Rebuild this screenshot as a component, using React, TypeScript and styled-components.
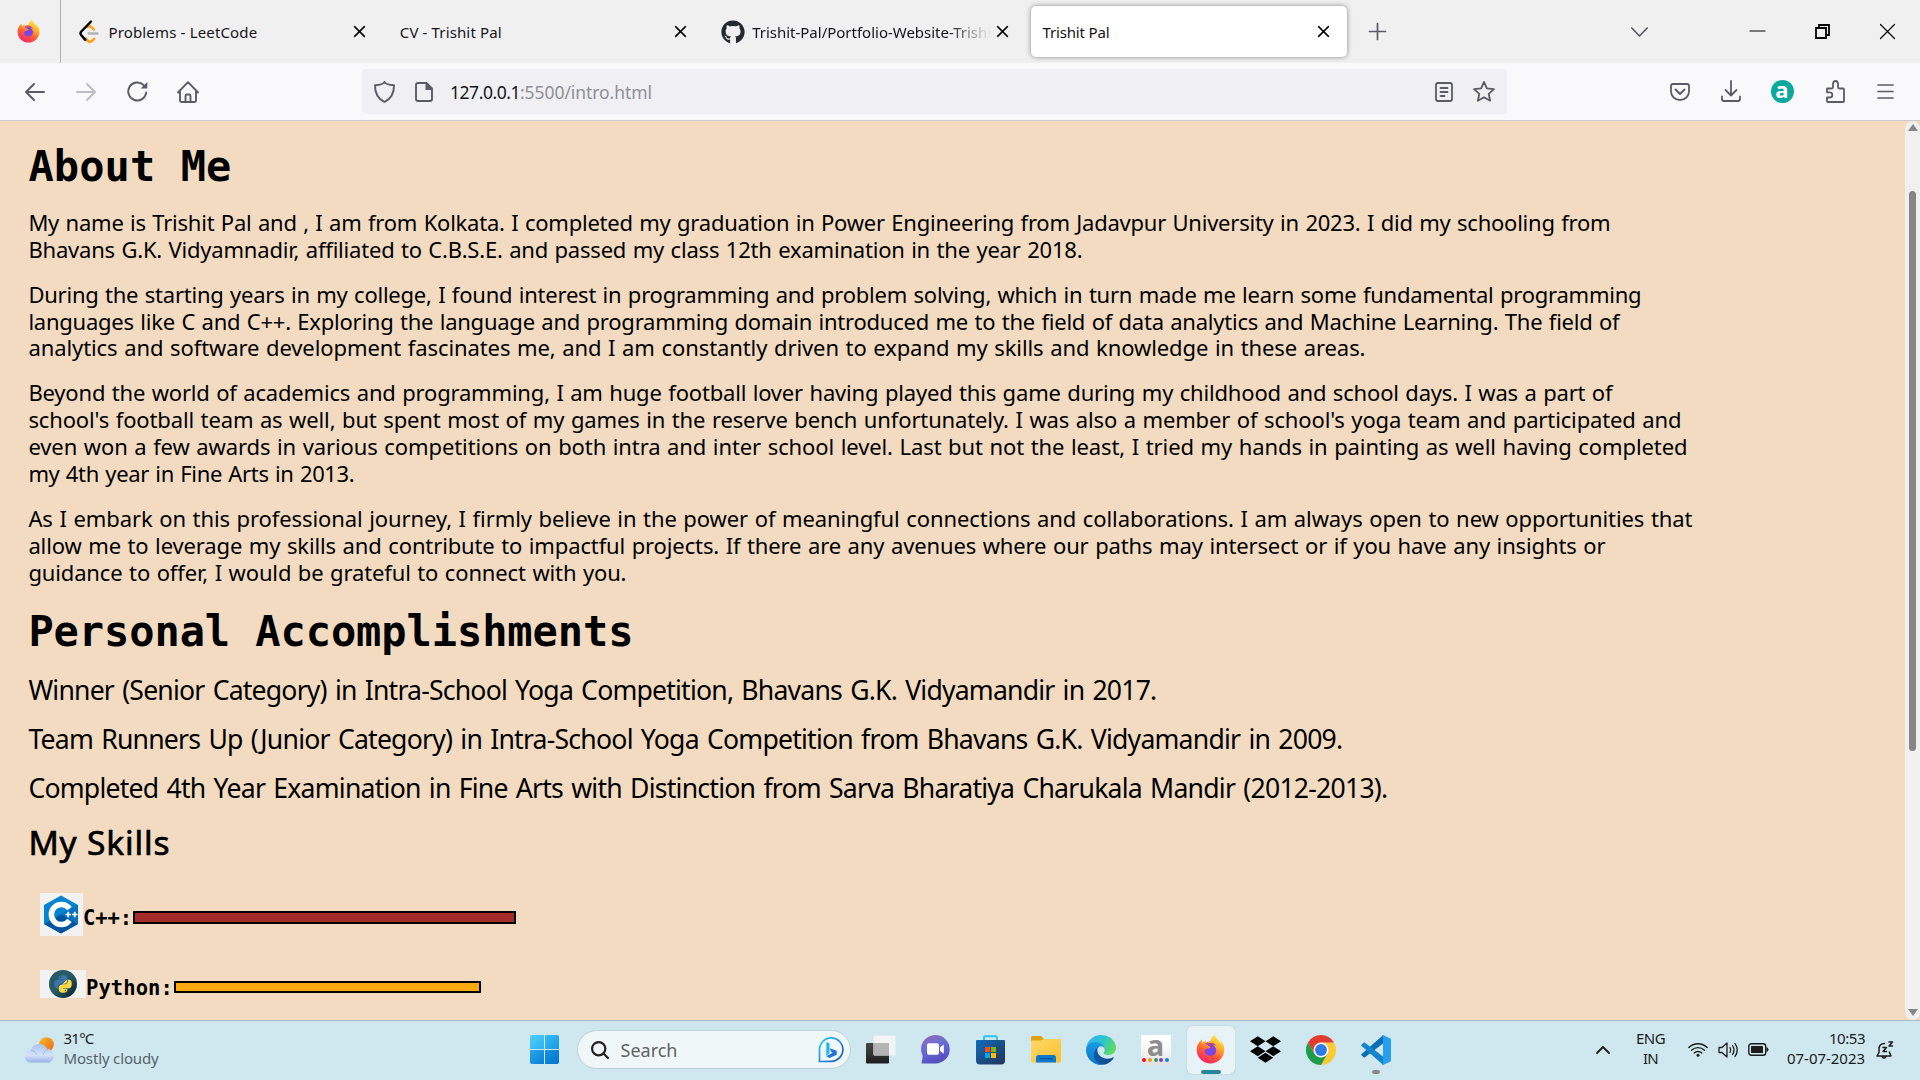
import React, { useLayoutEffect, useRef, useState } from 'react';
import styled, { createGlobalStyle, css } from 'styled-components';
import { FaGithub, FaDropbox, FaPython, FaFirefoxBrowser } from 'react-icons/fa';

const ui = '"Noto Sans", "Open Sans", sans-serif';
const mono = '"DejaVu Sans Mono", "Liberation Mono", monospace';

const Global = createGlobalStyle`
  * { box-sizing: border-box; }
  body { margin: 0; overflow: hidden; font-family: ${ui}; color: #000; }
  h1, h2, p, ul { margin: 0; padding: 0; font-weight: inherit; }
  ul { list-style: none; }
  svg { display: block; flex: none; overflow: visible; }
`;

/* ---------- text whose tracking is tuned to a measure ---------- */

const Tracked = styled.span`
  display: block;
  width: max-content;
  white-space: pre;
`;

function Fit({ w, children, className }: { w: number; children: string; className?: string }) {
  const ref = useRef<HTMLSpanElement>(null);
  const [spacing, setSpacing] = useState(0);
  useLayoutEffect(() => {
    if (ref.current) {
      const natural = ref.current.getBoundingClientRect().width;
      setSpacing((w - natural) / children.length);
    }
  }, [w, children]);
  return (
    <Tracked ref={ref} className={className} style={{ letterSpacing: spacing }}>
      {children}
    </Tracked>
  );
}

/* ---------- frame ---------- */

const Screen = styled.div`
  width: 1920px;
  height: 1080px;
  display: flex;
  flex-direction: column;
  overflow: hidden;
  background: #f2dbc1;
`;

const Slot = styled.div<{ $w: number; $ml?: number }>`
  flex: none;
  width: ${(p) => p.$w}px;
  margin-left: ${(p) => p.$ml ?? 0}px;
  display: flex;
  align-items: center;
  justify-content: center;
`;

/* ---------- tab strip ---------- */

const TabStrip = styled.div`
  flex: none;
  height: 63px;
  display: flex;
  align-items: center;
  background: #f0f0f0;
`;

const Pinned = styled.div`
  width: 61px;
  height: 63px;
  padding: 0 4px 1px 0;
  display: flex;
  align-items: center;
  justify-content: center;
  border-right: 1px solid #b0b0b2;
`;

const Tabs = styled.div`
  display: flex;
  gap: 5.2px;
  margin-left: 5.4px;
`;

const Tab = styled.div<{ $active?: boolean }>`
  width: 316.2px;
  height: 51px;
  padding: 0 12px;
  display: flex;
  align-items: center;
  border-radius: 5px;
  ${(p) => p.$active && css`
    background: #fff;
    box-shadow: 0 0 5px rgba(0, 0, 0, 0.45);
  `}
`;

const TabIcon = styled.div<{ $gap: number; $ml?: number }>`
  margin: 0 ${(p) => p.$gap}px 0 ${(p) => p.$ml ?? 0}px;
`;

const TabLabel = styled.div<{ $fade?: boolean }>`
  flex: 1;
  min-width: 0;
  font-size: 15px;
  line-height: 22px;
  padding-top: 1px;
  color: #15141a;
  ${(p) => p.$fade && css`
    mask-image: linear-gradient(to right, #000 calc(100% - 44px), transparent);
  `}
`;

const TabClose = styled.div`
  width: 22px;
  display: flex;
  justify-content: center;
`;

/* ---------- navigation bar ---------- */

const NavBar = styled.div`
  flex: none;
  height: 58px;
  display: flex;
  align-items: center;
  background: #f9f9fb;
  border-bottom: 1px solid #cccccf;
  color: #5b5b66;
`;

const UrlBar = styled.div`
  width: 1145px;
  height: 45px;
  margin-left: 154px;
  display: flex;
  align-items: center;
  border-radius: 5px;
  background: #f0eff4;
`;

const Address = styled.div`
  flex: 1;
  display: flex;
  margin-left: 8px;
  font-size: 17.5px;
  line-height: 24px;
  color: #15141a;
`;

const AddressPath = styled(Fit)`
  color: #8f8f96;
`;

const Avatar = styled.div`
  width: 23px;
  height: 23px;
  border-radius: 50%;
  background: #0aa89e;
  color: #fff;
  font: bold 22px/18px "Open Sans", sans-serif;
  text-align: center;
`;

/* ---------- web page ---------- */

const Viewport = styled.main`
  flex: none;
  height: 899px;
  display: flex;
  overflow: hidden;
`;

const Page = styled.div`
  width: 1905px;
  padding: 22px 0 0 28.4px;
`;

const Heading = styled.h1`
  font: bold 42px/48px ${mono};
`;

const Paragraph = styled.p`
  margin-top: 17.9px;
  font-size: 22px;
  line-height: 26.9px;
  word-spacing: 1px;
`;

const SectionHeading = styled(Heading)`
  margin-top: 22.5px;
`;

const Award = styled.li`
  margin-top: 16px;
  font-size: 26.6px;
  line-height: 33px;
  word-spacing: 2px;
`;

const Awards = styled.ul`
  padding-top: 2px;
`;

const SkillsHeading = styled.h2`
  margin-top: 16px;
  font-size: 33.5px;
  line-height: 42px;
  -webkit-text-stroke: 0.7px #000;
`;

const Skill = styled.div<{ $h: number; $mt: number }>`
  display: flex;
  align-items: flex-start;
  height: ${(p) => p.$h}px;
  margin: ${(p) => p.$mt}px 0 0 11.6px;
`;

const Logo = styled.div<{ $w: number }>`
  width: ${(p) => p.$w}px;
  height: 100%;
  display: flex;
  align-items: center;
  justify-content: center;
  background: #f2f2f3;
`;

const PythonDisc = styled.div`
  width: 28px;
  height: 28px;
  border-radius: 50%;
  display: flex;
  align-items: center;
  justify-content: center;
  background: linear-gradient(135deg, #245b66 50%, #12343e 80%);
`;

const SkillName = styled.div<{ $w: number; $mt: number }>`
  width: ${(p) => p.$w}px;
  margin-top: ${(p) => p.$mt}px;
  font: bold 20.5px/24px ${mono};
`;

const Bar = styled.div<{ $w: number; $h: number; $mt: number; $color: string }>`
  width: ${(p) => p.$w}px;
  height: ${(p) => p.$h}px;
  margin-top: ${(p) => p.$mt}px;
  border: 2px solid #000;
  background: ${(p) => p.$color};
`;

const ScrollTrack = styled.div`
  width: 15px;
  padding: 3px 0 4px;
  display: flex;
  flex-direction: column;
  align-items: center;
  justify-content: space-between;
  border-radius: 8px;
  background: #f0f0f0;
`;

const ScrollThumb = styled.div`
  width: 7px;
  height: 560px;
  margin: 60px 0 auto;
  border-radius: 4px;
  background: #868686;
`;

/* ---------- taskbar ---------- */

const Taskbar = styled.footer`
  flex: none;
  height: 60px;
  padding-bottom: 1.6px;
  display: flex;
  align-items: center;
  border-top: 1px solid #a9b9c0;
  background: #cfe8ef;
  color: #1c1c1c;
  font-size: 15px;
  line-height: 20px;
`;

const Stack = styled.div<{ $w: number; $ml: number; $align?: string }>`
  flex: none;
  width: ${(p) => p.$w}px;
  margin-left: ${(p) => p.$ml}px;
  padding-bottom: 3px;
  display: flex;
  flex-direction: column;
  align-items: ${(p) => p.$align ?? 'flex-start'};
`;

const Muted = styled(Fit)`
  color: #56646a;
`;

const StartGrid = styled.div`
  width: 29px;
  height: 29px;
  display: grid;
  grid-template-columns: 14px 14px;
  gap: 1px;
  border-radius: 2px;
  overflow: hidden;
`;

const Pane = styled.div<{ $a: string; $b: string }>`
  background: linear-gradient(135deg, ${(p) => p.$a}, ${(p) => p.$b});
`;

const SearchBox = styled.div`
  flex: none;
  width: 274px;
  height: 39px;
  margin-left: 4.5px;
  padding: 0 6px 0 13px;
  display: flex;
  align-items: center;
  border: 1px solid #bdd3d9;
  border-radius: 20px;
  background: #f0f7f9;
  font-size: 18px;
  line-height: 24px;
  color: #5d6265;
`;

const SearchLabel = styled.div`
  flex: 1;
  margin-left: 12px;
`;

const Apps = styled.div`
  flex: none;
  display: grid;
  grid-auto-flow: column;
  grid-auto-columns: 55px;
  height: 57px;
  margin-left: 2.5px;
`;

const AppCell = styled.div`
  position: relative;
  display: flex;
  align-items: center;
  justify-content: center;
`;

const ActiveTile = styled.div`
  width: 48px;
  height: 48px;
  display: flex;
  align-items: center;
  justify-content: center;
  border-radius: 5px;
  background: #e7f3f7;
  box-shadow: 0 0 1px rgba(0, 0, 0, 0.35);
`;

const Indicator = styled.div<{ $w: number; $color: string }>`
  position: absolute;
  bottom: 4px;
  left: 50%;
  width: ${(p) => p.$w}px;
  height: 4px;
  transform: translateX(-50%);
  border-radius: 2px;
  background: ${(p) => p.$color};
`;

const AlexaTile = styled.div`
  width: 30px;
  height: 30px;
  display: flex;
  flex-direction: column;
  align-items: center;
  background: linear-gradient(#fff 30%, #dfdfdf);
  color: #8d8d8d;
  font: bold 29px/20px "Open Sans", sans-serif;
`;

const Dots = styled.div`
  display: flex;
  gap: 1.6px;
  margin-top: 3px;
`;

const Dot = styled.i<{ $c: string }>`
  width: 4px;
  height: 4px;
  border-radius: 50%;
  background: ${(p) => p.$c};
`;

const FirefoxWrap = styled.div<{ $s: number }>`
  width: ${(p) => p.$s}px;
  height: ${(p) => p.$s}px;
  background: radial-gradient(circle at 50% 52%, #7b45e8 0 22%, #f4483f 40%, transparent 42%);
  svg {
    width: 100%;
    height: 100%;
    fill: url(#flame);
  }
`;

/* ---------- drawings ---------- */

type LineProps = { w: number; h: number; d: string; sw?: number; color?: string };
const Line = ({ w, h, d, sw = 1.9, color = 'currentColor' }: LineProps) => (
  <svg width={w} height={h} viewBox={`0 0 ${w} ${h}`} fill="none" stroke={color} strokeWidth={sw} strokeLinecap="round" strokeLinejoin="round">
    <path d={d} />
  </svg>
);

const Close = () => <Line w={11} h={11} d="M.6.6l9.8 9.8M10.4.6L.6 10.4" sw={1.5} color="#000" />;

const Hidden = styled.svg`
  position: absolute;
`;

const Gradients = () => (
  <Hidden width="0" height="0">
    <defs>
      <linearGradient id="flame" x1=".8" y1="0" x2=".3" y2="1">
        <stop offset="0" stopColor="#fff14a" />
        <stop offset=".35" stopColor="#ffb02a" />
        <stop offset=".65" stopColor="#ff5a36" />
        <stop offset="1" stopColor="#f0246f" />
      </linearGradient>
      <linearGradient id="edgeDeep" x1="0" y1="0" x2="1" y2="0">
        <stop offset="0" stopColor="#0c59a4" />
        <stop offset="1" stopColor="#114a8b" />
      </linearGradient>
      <linearGradient id="edgeMid" x1=".6" y1="0" x2=".3" y2="1">
        <stop offset="0" stopColor="#1b9de2" />
        <stop offset="1" stopColor="#0a78d0" />
      </linearGradient>
      <linearGradient id="edgeTop" x1="0" y1=".2" x2="1" y2=".6">
        <stop offset="0" stopColor="#35b5f1" />
        <stop offset=".5" stopColor="#2bc3d2" />
        <stop offset="1" stopColor="#5fdc5a" />
      </linearGradient>
      <linearGradient id="chat" x1="0" y1="0" x2=".4" y2="1">
        <stop offset="0" stopColor="#9b6aa8" />
        <stop offset=".45" stopColor="#6d6fd6" />
        <stop offset="1" stopColor="#5450c0" />
      </linearGradient>
      <linearGradient id="bing" x1="0" y1="0" x2="1" y2="1">
        <stop offset="0" stopColor="#2fd0ee" />
        <stop offset=".55" stopColor="#2585e0" />
        <stop offset="1" stopColor="#1b52b5" />
      </linearGradient>
      <linearGradient id="bag" x1="0" y1="0" x2="1" y2="1">
        <stop offset="0" stopColor="#0f6cbd" />
        <stop offset="1" stopColor="#243355" />
      </linearGradient>
      <linearGradient id="folder" x1="0" y1="0" x2="1" y2="1">
        <stop offset="0" stopColor="#ffd96b" />
        <stop offset="1" stopColor="#fcc02c" />
      </linearGradient>
      <linearGradient id="sun" x1="0" y1="0" x2="1" y2="1">
        <stop offset="0" stopColor="#f5b92c" />
        <stop offset="1" stopColor="#ee6a12" />
      </linearGradient>
      <linearGradient id="cloud" x1="0" y1="0" x2="0" y2="1">
        <stop offset="0" stopColor="#a9c2ef" />
        <stop offset=".6" stopColor="#d5e2f8" />
        <stop offset="1" stopColor="#98b2e8" />
      </linearGradient>
      <linearGradient id="dark" x1="0" y1="0" x2="0" y2="1">
        <stop offset="0" stopColor="#484846" />
        <stop offset="1" stopColor="#1d1d1d" />
      </linearGradient>
      <linearGradient id="snakes" x1="0" y1="0" x2=".9" y2="1">
        <stop offset=".5" stopColor="#3a76ab" />
        <stop offset=".5" stopColor="#ffd845" />
      </linearGradient>
    </defs>
  </Hidden>
);

const Firefox = ({ size }: { size: number }) => (
  <FirefoxWrap $s={size}><FaFirefoxBrowser /></FirefoxWrap>
);

const LeetCode = () => (
  <svg width="20" height="24" viewBox="0 0 20 24" fill="none" strokeLinecap="round" strokeLinejoin="round">
    <path d="M8.6 7.4l2.2-1.7 4.2 4" stroke="#ffa116" strokeWidth="2.3" />
    <path d="M7 18.4l2 2.6q1.8 1.7 3.8.1l2.4-2.3" stroke="#ffa116" strokeWidth="2.5" />
    <path d="M12 1.5L2.3 11.500q-1.600 1.900 0 3.800l4 4.600" stroke="#000" strokeWidth="2.4" />
    <path d="M9.500 13.500h9" stroke="#b3b3b3" strokeWidth="2.3" />
  </svg>
);

const Reload = () => (
  <svg width="21" height="21" viewBox="0 0 21 21" fill="none" stroke="currentColor" strokeWidth="1.9" strokeLinecap="round">
    <path d="M19.2 11.5A9 9 0 1 1 16.5 4" />
    <path d="M20.3 1v6.600h-6.600z" fill="currentColor" stroke="none" />
  </svg>
);

const Cpp = () => (
  <svg width="36" height="39" viewBox="0 0 36 39">
    <path d="M18 .5l17 9.500v19L18 38.500 1 29V10z" fill="#0484d1" />
    <path d="M1 29l17-9.500L35 29 18 38.500z" fill="#00549d" />
    <path d="M18 19.500L35 10v19z" fill="#0a70bd" />
    <path d="M26.500 13.700A10 10 0 1 0 26.500 25.300" fill="none" stroke="#fff" strokeWidth="5.5" />
    <path d="M22.500 19.500h5.500M25.250 16.800v5.400M29 19.500h5.500M31.750 16.800v5.400" stroke="#fff" strokeWidth="1.7" />
  </svg>
);

const PythonMark = styled(FaPython)`
  width: 20px;
  height: 20px;
  path { fill: url(#snakes); }
`;

const Weather = () => (
  <svg width="30" height="26" viewBox="0 0 30 26">
    <circle cx="21.5" cy="7.5" r="7.3" fill="url(#sun)" />
    <path d="M6 25.500a5.800 5.800 0 0 1-.4-12A8.800 8.800 0 0 1 22 11.800a7 7 0 0 1 2 13.700z" fill="url(#cloud)" />
    <path d="M5.600 13.500c3 0 5 1.500 5.800 4M18 18c1-3.500 3-5.500 5.500-5.800" fill="none" stroke="#8ba7e2" strokeWidth="1" opacity=".7" />
  </svg>
);

const Bing = () => (
  <svg width="26" height="26" viewBox="0 0 26 26" fill="none">
    <path d="M1.500 24.500V13A11.700 11.700 0 1 1 13 24.300z" stroke="url(#bing)" strokeWidth="1.7" />
    <path d="M8.300 5l3.200 1.300v9.700l-3.200 3.300z" fill="#22b5ec" />
    <path d="M8.300 19.300l3.700-2 2.700-1.600-1.500-1-1.500-3.500 7 2.600v4L11.600 21z" fill="#2172d8" />
  </svg>
);

const TaskView = () => (
  <svg width="30" height="29" viewBox="0 0 30 29">
    <rect x="0" y="8" width="23" height="20.5" rx="1" fill="url(#dark)" />
    <rect x="7.5" y=".5" width="22" height="20" rx="1" fill="#f4f4f4" />
    <path d="M7.500 8H23v12.500H8.500q-1 0-1-1z" fill="#b4b4b4" />
  </svg>
);

const Chat = () => (
  <svg width="29" height="29" viewBox="0 0 29 29">
    <path d="M14.500 0a14.200 14.200 0 1 1 0 28.400H.5L1.700 21A14.200 14.200 0 0 1 14.500 0z" fill="url(#chat)" />
    <rect x="6" y="8.3" width="12" height="11.5" rx="1.8" fill="#fff" />
    <path d="M19 12.500l3.800-3v9.300L19 15.800z" fill="#fff" />
  </svg>
);

const Store = () => (
  <svg width="29" height="30" viewBox="0 0 29 30">
    <path d="M8 6V2.500Q8 1.200 9.300 1.200h10.400Q21 1.200 21 2.500V6" fill="none" stroke="#2fc5f2" strokeWidth="1.9" />
    <path d="M1 5h27q1 0 1 1v19.500q0 4-4 4H4q-4 0-4-4V6q0-1 1-1z" fill="url(#bag)" />
    <path d="M9 12h5v5H9z" fill="#f25022" />
    <path d="M15 12h5v5h-5z" fill="#7fba00" />
    <path d="M9 18h5v5H9z" fill="#00a4ef" />
    <path d="M15 18h5v5h-5z" fill="#ffb900" />
  </svg>
);

const Folder = () => (
  <svg width="30" height="27" viewBox="0 0 30 27">
    <path d="M0 1.500Q0 0 1.500 0H10l3 3-3 3H0z" fill="#e0a010" />
    <path d="M0 4.500h10l2.500-1.500H28.500Q30 3 30 4.500V25q0 1.500-1.500 1.500h-27Q0 26.500 0 25z" fill="url(#folder)" />
    <path d="M5 26.500v-5q0-2.500 2.500-2.500h15q2.500 0 2.500 2.500v5z" fill="#0d78ce" />
    <path d="M9 22.700h12.500" stroke="#0a55a0" strokeWidth="1.2" strokeLinecap="round" />
  </svg>
);

const Edge = () => (
  <svg width="30" height="30" viewBox="0 0 256 256">
    <g transform="translate(-4.63 -4.92)">
      <path d="M235.680 195.480a93.730 93.730 0 0 1-10.540 4.710 101.870 101.870 0 0 1-35.900 6.460c-47.320 0-88.540-32.550-88.540-74.320A31.480 31.480 0 0 1 117.130 105c-42.800 1.800-53.800 46.400-53.800 72.530 0 73.880 68.090 81.370 82.760 81.370 7.910 0 19.840-2.300 27-4.560l1.310-.44a128.340 128.340 0 0 0 66.600-52.800 4 4 0 0 0-5.320-5.620z" fill="url(#edgeDeep)" />
      <path d="M110.340 246.340A79.200 79.200 0 0 1 87.600 225a80.720 80.720 0 0 1 29.530-120c3.120-1.470 8.450-4.130 15.540-4a32.350 32.350 0 0 1 25.690 13 31.880 31.880 0 0 1 6.360 18.660c0-.21 24.460-79.600-80-79.600-43.900 0-80 41.660-80 78.210a130.150 130.150 0 0 0 12.110 56 128 128 0 0 0 156.380 67.110 75.550 75.550 0 0 1-62.780-8z" fill="url(#edgeMid)" />
    </g>
    <path d="M152.330 148.860c-.81 1.050-3.300 2.500-3.300 5.660 0 2.610 1.700 5.120 4.720 7.230 14.380 10 41.490 8.680 41.560 8.680a59.560 59.560 0 0 0 30.270-8.350A61.380 61.380 0 0 0 256 109.130c.26-22.410-8-37.310-11.340-43.910C223.460 23.840 177.720 0 128 0A128 128 0 0 0 0 126.200c.48-36.540 36.800-66.050 80-66.050 3.500 0 23.460.34 42 10.070 16.340 8.580 24.900 18.940 30.850 29.210 6.180 10.670 7.280 24.150 7.280 29.520s-2.740 13.330-7.800 19.910z" fill="url(#edgeTop)" />
  </svg>
);

const Chrome = () => (
  <svg width="30" height="30" viewBox="0 0 48 48">
    <path d="M24 12h20.800A24 24 0 0 1 24 48L34.400 30z" fill="#fcc934" />
    <path d="M3.200 12A24 24 0 0 0 24 48l10.400-18L24 24 13.600 30z" fill="#1e9c49" />
    <path d="M3.200 12A24 24 0 0 1 44.800 12H24L13.600 30z" fill="#e33b2e" />
    <circle cx="24" cy="24" r="12" fill="#fff" />
    <circle cx="24" cy="24" r="9.5" fill="#2f7bea" />
  </svg>
);

const VsCode = () => (
  <svg width="30" height="30" viewBox="0 0 30 30">
    <path d="M22 .3v8.200L4 22.300q-.7.500-1.400 0L.6 20.500q-.8-.7 0-1.500z" fill="#0b6fb8" />
    <path d="M22 29.700v-8.200L4 7.700q-.7-.5-1.400 0L.6 9.500q-.8.700 0 1.500z" fill="#1485cd" />
    <path d="M22 0l7 3.300q1 .5 1 1.700v20q0 1.200-1 1.700L22 30q-.7.200-1.500-.5 1.500.2 1.500-1.500V2q0-1.700-1.500-1.500Q21.300-.2 22 0z" fill="#26a0f0" />
  </svg>
);

const Wifi = () => (
  <svg width="20" height="15" viewBox="0 0 20 15" fill="none" stroke="currentColor" strokeWidth="1.4" strokeLinecap="round">
    <path d="M.8 5.500a13 13 0 0 1 18.400 0M3.500 8.300a9.200 9.200 0 0 1 13 0M6.200 11a5.400 5.400 0 0 1 7.600 0" />
    <circle cx="10" cy="13.2" r="1.5" fill="currentColor" stroke="none" />
  </svg>
);

const Battery = () => (
  <svg width="21" height="13" viewBox="0 0 21 13">
    <rect x=".8" y=".8" width="16.9" height="11.4" rx="2.5" fill="none" stroke="currentColor" strokeWidth="1.4" />
    <rect x="3" y="3" width="12" height="7" rx=".6" fill="currentColor" />
    <path d="M18.500 4q2 .5 2 2.500t-2 2.500z" fill="currentColor" />
  </svg>
);

/* ---------- content ---------- */

const paragraphs: [number, string][][] = [
  [
    [1582, 'My name is Trishit Pal and , I am from Kolkata. I completed my graduation in Power Engineering from Jadavpur University in 2023. I did my schooling from'],
    [1054, 'Bhavans G.K. Vidyamnadir, affiliated to C.B.S.E. and passed my class 12th examination in the year 2018.'],
  ],
  [
    [1613, 'During the starting years in my college, I found interest in programming and problem solving, which in turn made me learn some fundamental programming'],
    [1591, 'languages like C and C++. Exploring the language and programming domain introduced me to the field of data analytics and Machine Learning. The field of'],
    [1337, 'analytics and software development fascinates me, and I am constantly driven to expand my skills and knowledge in these areas.'],
  ],
  [
    [1584, 'Beyond the world of academics and programming, I am huge football lover having played this game during my childhood and school days. I was a part of'],
    [1653, "school's football team as well, but spent most of my games in the reserve bench unfortunately. I was also a member of school's yoga team and participated and"],
    [1659, 'even won a few awards in various competitions on both intra and inter school level. Last but not the least, I tried my hands in painting as well having completed'],
    [326, 'my 4th year in Fine Arts in 2013.'],
  ],
  [
    [1664, 'As I embark on this professional journey, I firmly believe in the power of meaningful connections and collaborations. I am always open to new opportunities that'],
    [1577, 'allow me to leverage my skills and contribute to impactful projects. If there are any avenues where our paths may intersect or if you have any insights or'],
    [598, 'guidance to offer, I would be grateful to connect with you.'],
  ],
];

const awards: [number, string][] = [
  [1128, 'Winner (Senior Category) in Intra-School Yoga Competition, Bhavans G.K. Vidyamandir in 2017.'],
  [1314, 'Team Runners Up (Junior Category) in Intra-School Yoga Competition from Bhavans G.K. Vidyamandir in 2009.'],
  [1359, 'Completed 4th Year Examination in Fine Arts with Distinction from Sarva Bharatiya Charukala Mandir (2012-2013).'],
];

const alexaDots = ['#e8141c', '#f7941e', '#2e9e49', '#8a35d6', '#1381e0'];

export default function App() {
  return (
    <Screen>
      <Global />
      <Gradients />
      <TabStrip>
        <Pinned><Firefox size={23} /></Pinned>
        <Tabs>
          <Tab>
            <TabIcon $gap={9} $ml={1}><LeetCode /></TabIcon>
            <TabLabel><Fit w={149}>Problems - LeetCode</Fit></TabLabel>
            <TabClose><Close /></TabClose>
          </Tab>
          <Tab>
            <TabLabel><Fit w={102}>CV - Trishit Pal</Fit></TabLabel>
            <TabClose><Close /></TabClose>
          </Tab>
          <Tab>
            <TabIcon $gap={7}><FaGithub size={24} color="#24292f" /></TabIcon>
            <TabLabel $fade><Fit w={239}>Trishit-Pal/Portfolio-Website-Trishi</Fit></TabLabel>
            <TabClose><Close /></TabClose>
          </Tab>
          <Tab $active>
            <TabLabel><Fit w={67}>Trishit Pal</Fit></TabLabel>
            <TabClose><Close /></TabClose>
          </Tab>
        </Tabs>
        <Slot $w={40} $ml={11}><Line w={17} h={17} d="M8.500.5v16M.5 8.500h16" sw={1.7} color="#5b5b66" /></Slot>
        <Slot $w={40} $ml={221.5}><Line w={17} h={10} d="M.8 1l7.700 8 7.700-8" sw={1.7} color="#5b5b66" /></Slot>
        <Slot $w={40} $ml={78}><Line w={15} h={3} d="M0 1h15" sw={1.2} color="#000" /></Slot>
        <Slot $w={40} $ml={25.5}>
          <svg width="15" height="15" viewBox="0 0 15 15" fill="none" stroke="#000" strokeWidth="1.8">
            <path d="M1 4h10v10H1zM4 4V1h10v10h-3" />
          </svg>
        </Slot>
        <Slot $w={40} $ml={24.5}><Line w={15} h={15} d="M.5.5l14 14M14.500.5l-14 14" sw={1.2} color="#000" /></Slot>
      </TabStrip>

      <NavBar>
        <Slot $w={40} $ml={14.5}><Line w={20} h={18} d="M9 1L1 9l8 8M1 9h18" /></Slot>
        <Slot $w={40} $ml={11}><Line w={20} h={18} d="M11 1l8 8-8 8M19 9H1" color="#bcbcc2" /></Slot>
        <Slot $w={40} $ml={12}><Reload /></Slot>
        <Slot $w={40} $ml={10}>
          <Line w={22} h={22} d="M1 11.500L11 1.200l10 10.300M3 10v9.500q0 1.500 1.500 1.500h13q1.500 0 1.500-1.500V10M8.500 21v-6q0-1.500 1.500-1.500h2q1.500 0 1.500 1.500v6" />
        </Slot>
        <UrlBar>
          <Slot $w={40} $ml={2.5}>
            <Line w={21} h={22} d="M10.500 1Q11.500 3.700 20 4.200 20.300 16 10.500 21 .7 16 1 4.200 9.500 3.700 10.500 1z" />
          </Slot>
          <Slot $w={36} $ml={2}>
            <svg width="18" height="20" viewBox="0 0 18 20">
              <path d="M3 1h8.500L17 6.500V17q0 2-2 2H3q-2 0-2-2V3q0-2 2-2z" fill="none" stroke="currentColor" strokeWidth="1.9" />
              <path d="M10.500 0L18 8h-7.500z" fill="currentColor" />
            </svg>
          </Slot>
          <Address>
            <Fit w={70}>127.0.0.1</Fit>
            <AddressPath w={132}>:5500/intro.html</AddressPath>
          </Address>
          <Slot $w={30}>
            <Line w={18} h={20} d="M3 1h12q2 0 2 2v14q0 2-2 2H3q-2 0-2-2V3q0-2 2-2zM5.500 6h7M5.500 10h7M5.500 14h4" sw={1.8} />
          </Slot>
          <Slot $w={40} $ml={5}>
            <Line w={22} h={21} d="M11 1l2.900 6.300 7 .8-5.200 4.700 1.400 6.900-6.100-3.500-6.100 3.500 1.400-6.900L1.100 8.100l7-.8z" sw={1.8} />
          </Slot>
          <Slot $w={2.5} />
        </UrlBar>
        <Slot $w={40} $ml={153}>
          <Line w={20} h={18} d="M3 1h14q2 0 2 2v5.500a9 8.500 0 0 1-18 0V3q0-2 2-2zM5.500 6.500L10 11l4.500-4.500" sw={1.8} />
        </Slot>
        <Slot $w={40} $ml={11}><Line w={20} h={21} d="M10 0v14M4.500 9l5.500 5.500L15.500 9M1 15.500v2.500q0 2 2 2h14q2 0 2-2v-2.500" sw={1.8} /></Slot>
        <Slot $w={40} $ml={11.5}><Avatar>a</Avatar></Slot>
        <Slot $w={40} $ml={13}>
          <Line w={19} h={23} d="M1 8.500h4.500q1.500 0 1.500-1.500V4q0-3 2.500-3T12 4v3q0 1.500 1.500 1.500H17q1 0 1 1V21q0 1-1 1H2q-1 0-1-1v-3.500h2.500q2.800 0 2.800-2.600T3.500 12.300H1z" sw={1.8} />
        </Slot>
        <Slot $w={40} $ml={10.5}><Line w={17} h={15} d="M1 1h15M1 7.500h15M1 14h15" sw={1.7} /></Slot>
      </NavBar>

      <Viewport>
        <Page>
          <Heading><Fit w={203}>About Me</Fit></Heading>
          {paragraphs.map((lines, i) => (
            <Paragraph key={i}>
              {lines.map(([w, text]) => <Fit key={text} w={w}>{text}</Fit>)}
            </Paragraph>
          ))}
          <SectionHeading><Fit w={605}>Personal Accomplishments</Fit></SectionHeading>
          <Awards>
            {awards.map(([w, text]) => <Award key={text}><Fit w={w}>{text}</Fit></Award>)}
          </Awards>
          <SkillsHeading><Fit w={142}>My Skills</Fit></SkillsHeading>
          <Skill $h={43} $mt={30}>
            <Logo $w={43}><Cpp /></Logo>
            <SkillName $w={50} $mt={13}><Fit w={49}>C++:</Fit></SkillName>
            <Bar $w={383} $h={13} $mt={18} $color="#a52a2a" />
          </Skill>
          <Skill $h={28} $mt={34}>
            <Logo $w={46}>
              <PythonDisc><PythonMark /></PythonDisc>
            </Logo>
            <SkillName $w={88} $mt={6}><Fit w={87}>Python:</Fit></SkillName>
            <Bar $w={307} $h={12} $mt={11} $color="#ffa911" />
          </Skill>
        </Page>
        <ScrollTrack>
          <svg width="10" height="7" viewBox="0 0 10 7"><path d="M5 0l5 7H0z" fill="#868686" /></svg>
          <ScrollThumb />
          <svg width="10" height="7" viewBox="0 0 10 7"><path d="M5 7l5-7H0z" fill="#868686" /></svg>
        </ScrollTrack>
      </Viewport>

      <Taskbar>
        <Slot $w={30} $ml={25}><Weather /></Slot>
        <Stack $w={110} $ml={8.5}>
          <Fit w={30}>31°C</Fit>
          <Muted w={95}>Mostly cloudy</Muted>
        </Stack>
        <Slot $w={55} $ml={343.5}>
          <StartGrid>
            <Pane $a="#4fd0fb" $b="#2ab0ef" />
            <Pane $a="#38bdf4" $b="#1a98e2" />
            <Pane $a="#29a8ea" $b="#0a7fd6" />
            <Pane $a="#1a93e0" $b="#0072cf" />
          </StartGrid>
        </Slot>
        <SearchBox>
          <Line w={18} h={18} d="M14.300 7.700a6.600 6.600 0 1 1-13.200 0 6.600 6.600 0 0 1 13.200 0zM12.500 12.500l4.500 4.500" sw={2.2} color="#222" />
          <SearchLabel><Fit w={57}>Search</Fit></SearchLabel>
          <Bing />
        </SearchBox>
        <Apps>
          <AppCell><TaskView /></AppCell>
          <AppCell><Chat /></AppCell>
          <AppCell><Store /></AppCell>
          <AppCell><Folder /></AppCell>
          <AppCell><Edge /></AppCell>
          <AppCell>
            <AlexaTile>
              a
              <Dots>{alexaDots.map((c) => <Dot key={c} $c={c} />)}</Dots>
            </AlexaTile>
          </AppCell>
          <AppCell>
            <ActiveTile><Firefox size={29} /></ActiveTile>
            <Indicator $w={20} $color="#27869a" />
          </AppCell>
          <AppCell><FaDropbox size={31} color="#000" /></AppCell>
          <AppCell><Chrome /></AppCell>
          <AppCell><VsCode /><Indicator $w={8} $color="#84898c" /></AppCell>
        </Apps>
        <Slot $w={20} $ml={190}><Line w={14} h={8} d="M1 7l6-6 6 6" sw={1.8} /></Slot>
        <Stack $w={40} $ml={17.5} $align="center">
          <Fit w={29}>ENG</Fit>
          <Fit w={15}>IN</Fit>
        </Stack>
        <Slot $w={20} $ml={17}><Wifi /></Slot>
        <Slot $w={20} $ml={10}>
          <Line w={20} h={16} d="M1 5.500h3L9 1v14l-5-4.500H1zM12 5.500q1.500 2.500 0 5M14.500 3.500q3 4.500 0 9M17 1.500q4.500 6.500 0 13" sw={1.3} />
        </Slot>
        <Slot $w={21} $ml={10}><Battery /></Slot>
        <Stack $w={80} $ml={16.5} $align="flex-end">
          <Fit w={36}>10:53</Fit>
          <Fit w={78}>07-07-2023</Fit>
        </Stack>
        <Slot $w={18} $ml={11}>
          <Line w={18} h={18} d="M8.500 2.500Q3 2.500 3 8.500v3L1 15h14l-1.500-3.500V11M6 15.500q2 3 4 0M7 6.500h3.500L7 10.500h3.500M13 1h3.500L13 5h3.500" sw={1.5} />
        </Slot>
      </Taskbar>
    </Screen>
  );
}
